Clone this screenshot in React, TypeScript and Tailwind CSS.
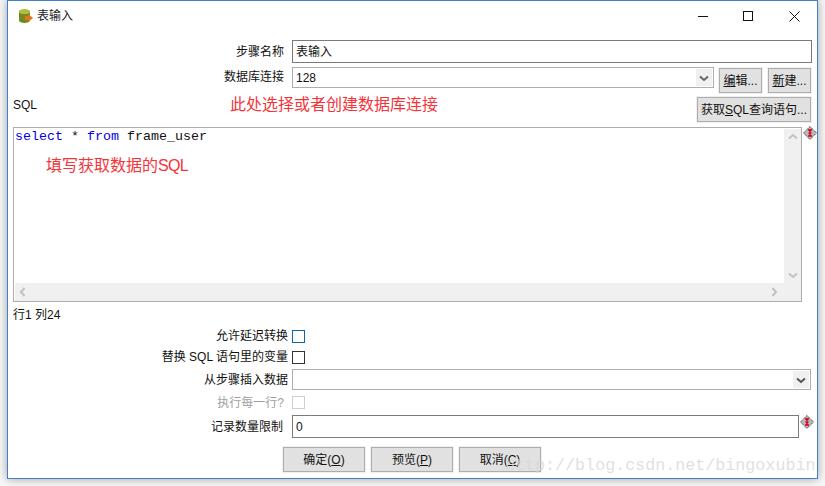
import React from 'react';

const cjk = "font-['Liberation_Sans','Noto_Sans_CJK_SC',sans-serif]";
const btn = 'flex items-center justify-center border border-[#adadad] bg-[#e1e1e1] text-[12px] text-[#111] outline outline-1 outline-[#f0f0f0]';

function Diamond() {
  return (
    <svg width="14" height="14" viewBox="0 0 14 14" className="shrink-0">
      <path d="M7 .5 13.500 7 7 13.500 .5 7Z" fill="#b9b9b9" stroke="#444" strokeDasharray="1.4 .7" />
      <path d="M5 4h4M7 3v3M5.500 7h3M7 7v3M5 10h4" stroke="#d4001c" strokeWidth="1.5" fill="none" />
    </svg>
  );
}

function Chevron({ dir, color }: { dir: 'up' | 'down' | 'left' | 'right'; color: string }) {
  const d = {
    up: 'M2 7.500 6 4l4 3.500',
    down: 'M2 4.500 6 8l4-3.500',
    left: 'M7.500 2 4 6l3.500 4',
    right: 'M4.500 2 8 6l-3.500 4',
  }[dir];
  return (
    <svg width="12" height="12" viewBox="0 0 12 12">
      <path d={d} fill="none" stroke={color} strokeWidth="2" />
    </svg>
  );
}

function Label({ children, className = 'w-[276px]' }: { children: React.ReactNode; className?: string }) {
  return <div className={`${className} shrink-0 text-right text-[12px] leading-4 text-[#111]`}>{children}</div>;
}

function Btn({ w, label, ul, tail }: { w: string; label: string; ul: string; tail: string }) {
  return (
    <div className={`${btn} ${w}`}>
      {label}
      <span className="underline">{ul}</span>
      {tail}
    </div>
  );
}

export default function App() {
  return (
    <div className={`relative h-[486px] w-[825px] overflow-hidden bg-[#f7f7f7] ${cjk}`}>
      <div className="relative ml-[7px] h-[479px] w-[811px] border border-[#3c83cc] bg-white shadow-[0_0_9px_rgba(0,0,0,0.35)]">
        {/* Title bar */}
        <div className="flex h-[30px] items-center pl-[10px] pr-[17px]">
          <svg width="15" height="16" viewBox="0 0 15 16" className="shrink-0">
            <ellipse cx="6.500" cy="3.500" rx="5.500" ry="2.500" fill="#b5bb3c" />
            <path d="M1 3.500v9c0 1.500 2.500 2.500 5.500 2.500s5.500-1 5.500-2.500v-9c0 1.500-2.500 2.500-5.500 2.500s-5.500-1-5.500-2.500Z" fill="#6f8a1f" />
            <path d="M7 8h3V6l5 4-5 4v-2H7Z" fill="#e0741c" />
          </svg>
          <span className="ml-[4px] text-[12px] text-[#222]">表输入</span>
          <div className="ml-auto flex items-center">
            <svg width="11" height="11" viewBox="0 0 11 11"><path d="M0 5.500h10" stroke="#111" /></svg>
            <svg width="11" height="11" viewBox="0 0 11 11" className="ml-[34px]"><rect x=".5" y=".5" width="9" height="9" fill="none" stroke="#111" /></svg>
            <svg width="11" height="11" viewBox="0 0 11 11" className="ml-[35px]"><path d="M.5.500l10 10M10.500.500l-10 10" stroke="#111" /></svg>
          </div>
        </div>

        {/* Step name */}
        <div className="mt-[9px] flex h-[23px] items-center">
          <Label>步骤名称</Label>
          <div className="ml-[8px] flex h-[23px] w-[520px] items-center border border-[#7a7a7a] pl-[3px] text-[12px] text-[#111]">表输入</div>
        </div>

        {/* Connection */}
        <div className="mt-[4px] flex h-[26px] items-start">
          <Label className="w-[276px] pt-[2px]">数据库连接</Label>
          <div className="ml-[8px] flex h-[21px] w-[422px] items-center justify-between border border-[#adadad] pl-[3px] pr-px text-[12px] text-[#111]">
            128
            <div className="flex h-[17px] w-[16px] items-center justify-center bg-[#f0f0f0]"><Chevron dir="down" color="#666" /></div>
          </div>
          <Btn w="ml-[5px] mt-px h-[25px] w-[43px]" label="" ul="编" tail="辑..." />
          <Btn w="ml-[6px] mt-px h-[25px] w-[43px]" label="" ul="新" tail="建..." />
        </div>

        {/* SQL header row */}
        <div className="mt-[4px] flex h-[25px] items-start">
          <div className="ml-[5px] w-[218px] text-[12px] leading-4 text-[#111]">SQL</div>
          <div className="-mt-[3px] -ml-px text-[16px] leading-[22px] text-[#f5333a]">此处选择或者创建数据库连接</div>
          <Btn w="absolute left-[689px] top-[96px] h-[25px] w-[114px]" label="获取" ul="S" tail="QL查询语句..." />
        </div>

        {/* Editor */}
        <div className="mt-[5px] flex items-start">
          <div className="ml-[5px] flex h-[175px] w-[791px] flex-col border border-[#adadad]">
            <div className="flex min-h-0 flex-1">
              <div className="flex-1 pl-px pt-px">
                <div className="font-['Liberation_Mono',monospace] text-[13.33px] leading-[15px] text-[#111]">
                  <span className="text-[#0000e6]">select</span> * <span className="text-[#0000e6]">from</span> frame_user
                </div>
                <div className="ml-[31px] mt-[12px] text-[16px] leading-[20px] text-[#f5333a]">
                  填写获取数据的<span className="tracking-[-0.7px]">SQL</span>
                </div>
              </div>
              <div className="mt-px flex w-[17px] flex-col items-center justify-between bg-[#f0f0f0] py-[2px]">
                <Chevron dir="up" color="#c2c2c2" />
                <Chevron dir="down" color="#c2c2c2" />
              </div>
            </div>
            <div className="ml-px flex h-[18px] items-center justify-between bg-[#f0f0f0] pl-[2px] pr-[21px]">
              <Chevron dir="left" color="#c2c2c2" />
              <Chevron dir="right" color="#c2c2c2" />
            </div>
          </div>
          <div className="ml-px mt-[-1px]"><Diamond /></div>
        </div>

        {/* Cursor position */}
        <div className="ml-[5px] mt-[5px] h-[16px] text-[12px] leading-4 text-[#111]">行1 列24</div>

        {/* Options */}
        <div className="mt-[6px] flex h-[14px] items-center">
          <Label className="w-[280px]">允许延迟转换</Label>
          <div className="ml-[4px] h-[13px] w-[13px] border border-[#0a67b0]" />
        </div>
        <div className="mt-[7px] flex h-[14px] items-center">
          <Label className="w-[280px]">替换 SQL 语句里的变量</Label>
          <div className="ml-[4px] h-[13px] w-[13px] border border-[#333]" />
        </div>
        <div className="mt-[5px] flex h-[21px] items-center">
          <Label className="w-[280px]">从步骤插入数据</Label>
          <div className="ml-[4px] flex h-[21px] w-[519px] items-center justify-end border border-[#adadad] pr-px">
            <div className="flex h-[17px] w-[16px] items-center justify-center bg-[#f0f0f0]"><Chevron dir="down" color="#555" /></div>
          </div>
        </div>
        <div className="mt-[6px] flex h-[13px] items-center">
          <div className="w-[276px] shrink-0 text-right text-[12px] leading-4 text-[#a0a0a0]">执行每一行?</div>
          <div className="ml-[8px] h-[13px] w-[13px] border border-[#cfcfcf]" />
        </div>
        <div className="mt-[6px] flex h-[23px] items-center">
          <Label className="w-[275px]">记录数量限制</Label>
          <div className="ml-[9px] flex h-[23px] w-[507px] items-center border border-[#7a7a7a] pl-[3px] text-[12px] text-[#111]">0</div>
          <div className="ml-px self-start"><Diamond /></div>
        </div>

        {/* Actions */}
        <div className="ml-[275px] mt-[9px] flex gap-[6px]">
          <Btn w="h-[25px] w-[82px]" label="确定(" ul="O" tail=")" />
          <Btn w="h-[25px] w-[82px]" label="预览(" ul="P" tail=")" />
          <Btn w="h-[25px] w-[82px]" label="取消(" ul="C" tail=")" />
        </div>
      </div>

      {/* Watermark */}
      <div className="pointer-events-none absolute left-[505px] top-[456px] whitespace-nowrap font-['Liberation_Mono',monospace] text-[16.700px] leading-5 text-[#d8d8d8]/80">
        http://blog.csdn.net/bingoxubin
      </div>
    </div>
  );
}
